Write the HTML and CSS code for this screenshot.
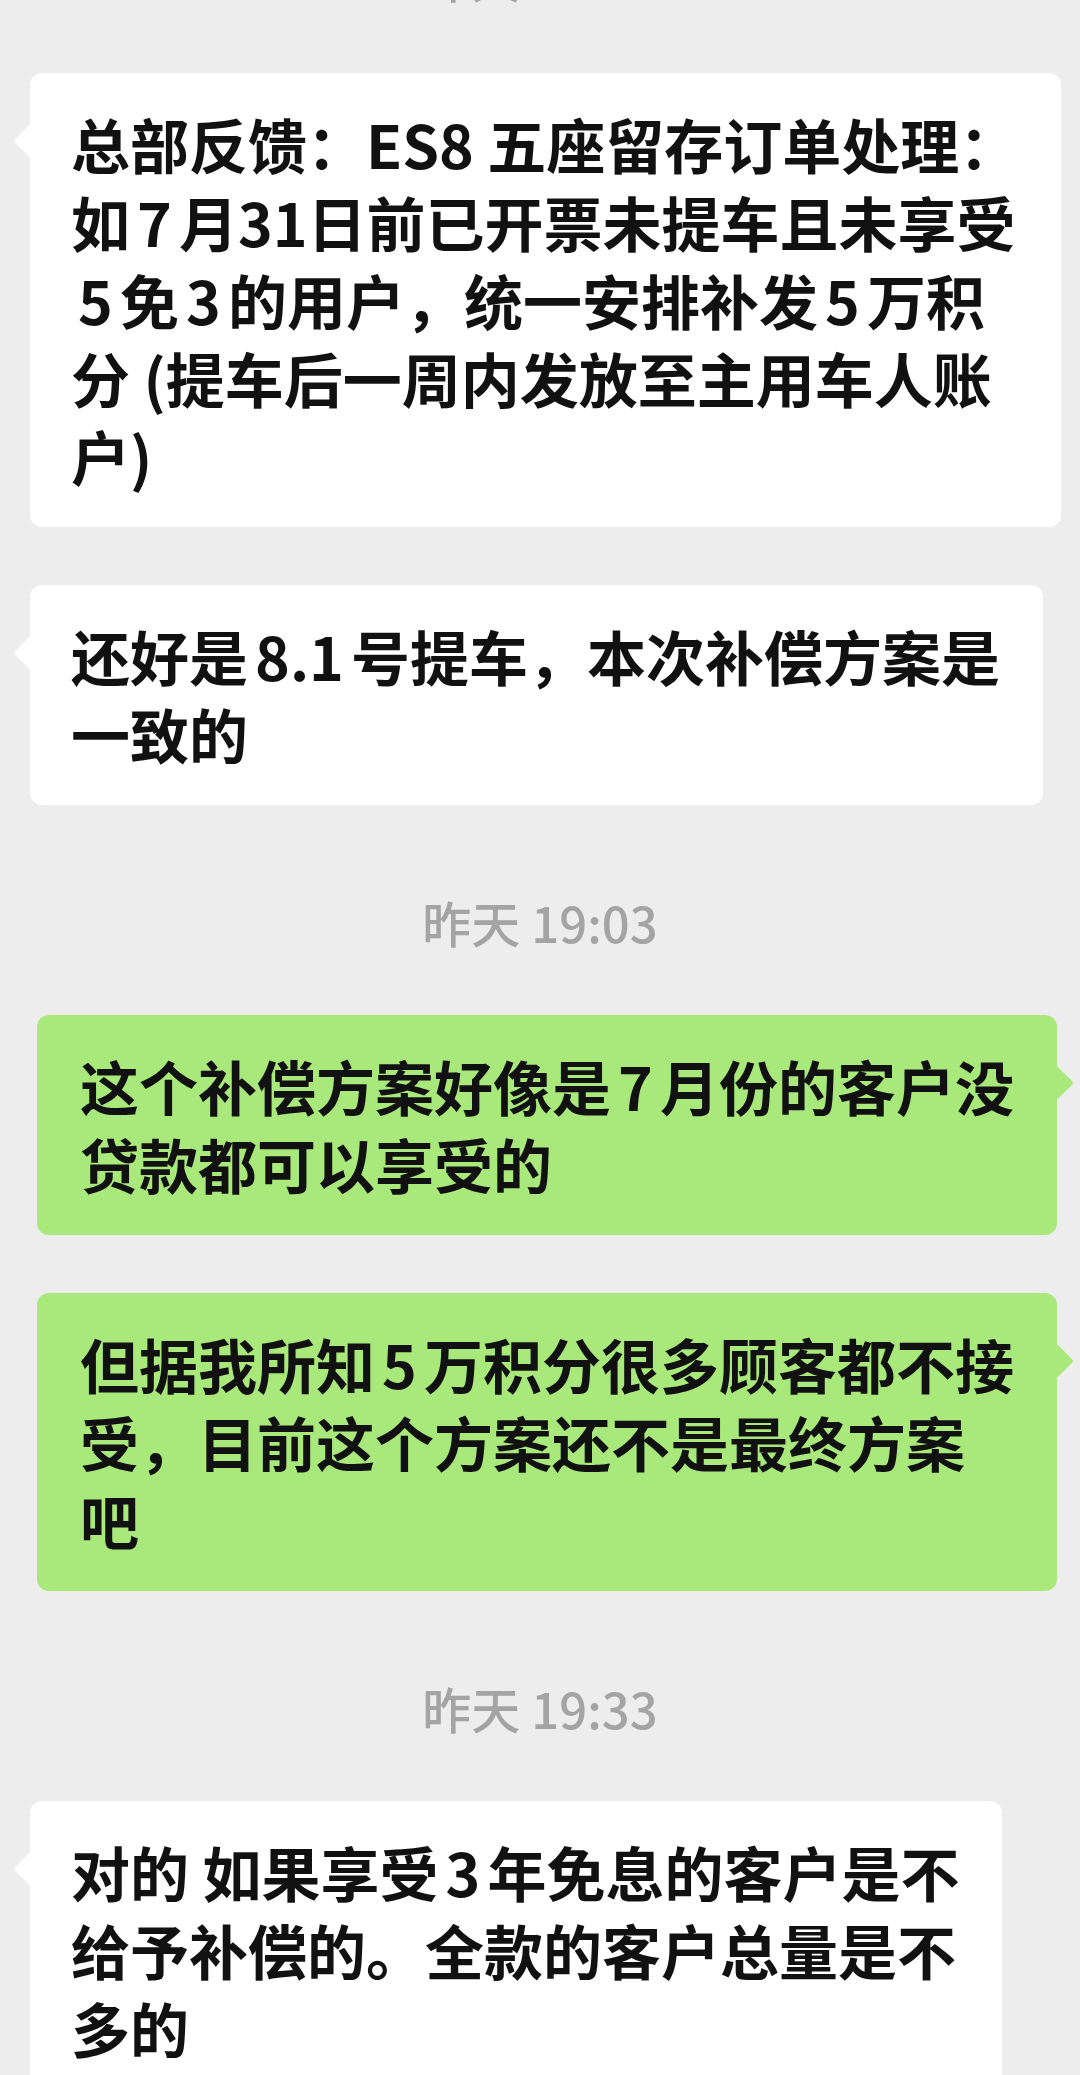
FILE: index.html
```html
<!DOCTYPE html>
<html lang="zh-CN">
<head>
  <meta charset="UTF-8">
  <title>聊天记录</title>
  <meta name="viewport" content="width=device-width, initial-scale=1">
  <link rel="stylesheet" href="styles.css">
</head>
<body>
  <div class="chat">
    <div class="time first">昨天 18:47</div>

    <div class="row left">
      <div class="bubble">总部反馈：ES8 五座留存订单处理：<br>如<span class="num">7</span>月31日前已开票未提车且未享受<br><span class="num">5</span>免<span class="num">3</span>的用户，统一安排补发<span class="num">5</span>万积<br>分 (提车后一周内发放至主用车人账<br>户)</div>
    </div>
    <div class="row left">
      <div class="bubble">还好是<span class="num">8.1</span>号提车，本次补偿方案是<br>一致的</div>
    </div>

    <div class="time">昨天 19:03</div>

    <div class="row right">
      <div class="bubble green">这个补偿方案好像是<span class="num">7</span>月份的客户没<br>贷款都可以享受的</div>
    </div>
    <div class="row right">
      <div class="bubble green">但据我所知<span class="num">5</span>万积分很多顾客都不接<br>受，目前这个方案还不是最终方案<br>吧</div>
    </div>

    <div class="time">昨天 19:33</div>

    <div class="row left">
      <div class="bubble">对的 如果享受<span class="num">3</span>年免息的客户是不<br>给予补偿的。全款的客户总量是不<br>多的</div>
    </div>
  </div>
</body>
</html>
```

FILE: styles.css
```css
body {
  margin: 0;
  background: #ededed;
  font-family: "Noto Sans CJK SC", "Noto Sans", sans-serif;
  color: #111;
  overflow: hidden;
}
.chat {
  display: flex;
  flex-direction: column;
}
.time {
  text-align: center;
  font-size: 49px;
  line-height: 60px;
  font-weight: 500;
  color: #a4a4a4;
  margin: 29px 0 63px;
}
.time.first {
  margin-top: -53px;
  margin-bottom: 66px;
}
.row {
  display: flex;
  margin-bottom: 58px;
}
.row.left {
  justify-content: flex-start;
  padding-left: 30px;
}
.row.right {
  justify-content: flex-end;
  padding-right: 23px;
}
.bubble {
  position: relative;
  background: #fff;
  border-radius: 12px;
  padding: 32px 43px 32px 41px;
  font-size: 59px;
  line-height: 78px;
  font-weight: 700;
  white-space: nowrap;
}
.bubble::before {
  content: "";
  position: absolute;
  top: 56px;
  left: -12px;
  width: 24px;
  height: 24px;
  background: inherit;
  border-radius: 3px;
  transform: rotate(45deg);
}
.bubble.green {
  background: #a9e97b;
  padding-left: 43px;
}
.right .bubble::before {
  left: auto;
  right: -12px;
}
.num {
  margin: 0 0.12em;
}
```
